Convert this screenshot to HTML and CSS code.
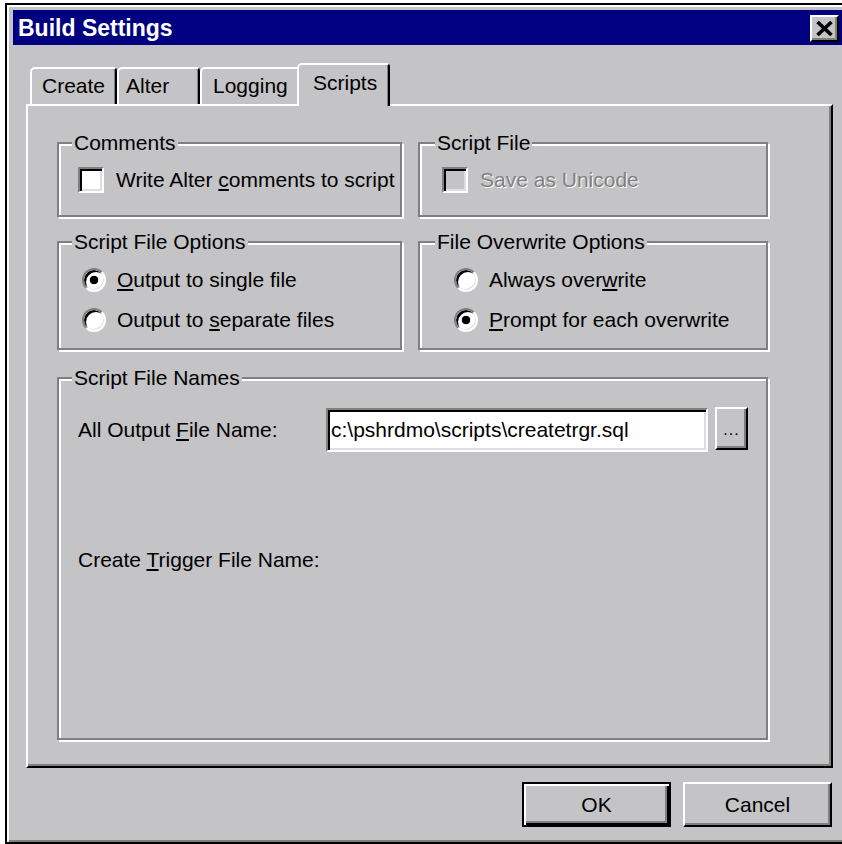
FILE: index.html
```html
<!DOCTYPE html>
<html lang="en">
<head>
<meta charset="utf-8">
<title>Build Settings</title>
<link rel="stylesheet" href="styles.css">
</head>
<body>
<div class="window">
  <div class="titlebar">
    <span class="title">Build Settings</span>
    <div class="close" role="button" aria-label="Close">
      <svg width="17" height="15" viewBox="0 0 17 15" aria-hidden="true">
        <path d="M1.5 1 L15.5 14 M15.5 1 L1.5 14" stroke="#000" stroke-width="3.6" fill="none"/>
      </svg>
    </div>
  </div>

  <div class="dialog-body">
    <div class="tabs">
      <div class="tab tab-create">Create</div>
      <div class="tab tab-alter">Alter</div>
      <div class="tab tab-logging">Logging</div>
      <div class="tab tab-scripts active">Scripts</div>
    </div>

    <div class="panel">
      <div class="groups">
        <fieldset class="group">
          <legend>Comments</legend>
          <div class="group-content comments">
            <div class="option"><span class="check"></span><span>Write Alter <u>c</u>omments to script</span></div>
          </div>
        </fieldset>

        <fieldset class="group right">
          <legend>Script File</legend>
          <div class="group-content script-file">
            <div class="option disabled"><span class="check"></span><span>Save as Unicode</span></div>
          </div>
        </fieldset>

        <fieldset class="group">
          <legend>Script File Options</legend>
          <div class="group-content radios file-options">
            <div class="option"><span class="radio checked"></span><span><u>O</u>utput to single file</span></div>
            <div class="option"><span class="radio"></span><span>Output to <u>s</u>eparate files</span></div>
          </div>
        </fieldset>

        <fieldset class="group right">
          <legend>File Overwrite Options</legend>
          <div class="group-content radios overwrite">
            <div class="option"><span class="radio"></span><span>Always over<u>w</u>rite</span></div>
            <div class="option"><span class="radio checked"></span><span><u>P</u>rompt for each overwrite</span></div>
          </div>
        </fieldset>
      </div>

      <fieldset class="group names">
        <legend>Script File Names</legend>
        <div class="group-content name-rows">
          <div class="name-row">
            <span class="name-label">All Output <u>F</u>ile Name:</span>
            <div class="textbox">c:\pshrdmo\scripts\createtrgr.sql</div>
            <div class="browse">...</div>
          </div>
          <div class="name-row">
            <span class="name-label">Create <u>T</u>rigger File Name:</span>
          </div>
        </div>
      </fieldset>
    </div>

    <div class="buttons">
      <div class="btn default">OK</div>
      <div class="btn">Cancel</div>
    </div>
  </div>
</div>
</body>
</html>
```

FILE: styles.css
```css
* {
  box-sizing: border-box;
}

html,
body {
  margin: 0;
  padding: 0;
  background: #fff;
  overflow: hidden;
}

body {
  width: 842px;
  height: 844px;
  font-family: "Liberation Sans", Arial, sans-serif;
  font-size: 21px;
  line-height: 24px;
  color: #000;
}

/* Window frame: runs on past the right and bottom edges */
.window {
  margin: 3px 0 0 5px;
  width: 846px;
  height: 841px;
  background: #c4c3c6;
  border: 2px solid #000;
  box-shadow: inset 2px 2px 0 #fff, inset -2px -2px 0 #808080;
  padding: 5px 6px 0 6px;
}

/* Caption bar */
.titlebar {
  height: 35px;
  background: #000080;
  display: flex;
  align-items: center;
  justify-content: space-between;
  padding-left: 5px;
}

.title {
  color: #fff;
  font-weight: bold;
  font-size: 23px;
  line-height: 28px;
}

.close {
  width: 29px;
  height: 27px;
  margin-right: 4px;
  margin-top: 2px;
  background: #c4c3c6;
  border: 2px solid;
  border-color: #fff #000 #000 #fff;
  box-shadow: inset -2px -2px 0 #808080;
  display: flex;
  align-items: center;
  justify-content: center;
}

.close svg {
  display: block;
}

/* Client area */
.dialog-body {
  padding: 18px 0 0 13px;
}

/* Tab strip */
.tabs {
  display: flex;
  align-items: flex-end;
  height: 43px;
  margin-bottom: -2px;
  padding-left: 4px;
}

.tab {
  height: 37px;
  margin-bottom: 2px;
  background: #c4c3c6;
  border: 2px solid;
  border-bottom: 0;
  border-color: #fff #000 transparent #fff;
  border-radius: 5px 4px 0 0;
  box-shadow: inset -1px 0 0 #808080;
  padding-top: 5px;
  white-space: nowrap;
}

.tab-create {
  width: 87px;
  padding-left: 10px;
}

.tab-alter {
  width: 83px;
  padding-left: 7px;
}

.tab-logging {
  width: 101px;
  padding-left: 11px;
}

.tab-scripts {
  width: 93px;
  padding-left: 14px;
}

.tab.active {
  position: relative;
  z-index: 1;
  height: 43px;
  margin-bottom: 0;
  margin-left: -4px;
  padding-top: 6px;
}

/* Tab page */
.panel {
  width: 807px;
  height: 664px;
  border: 2px solid;
  border-color: #fff #000 #000 #fff;
  box-shadow: inset -2px -2px 0 #808080;
  padding: 25px 0 26px 29px;
  display: flex;
  flex-direction: column;
  align-items: flex-start;
}

.groups {
  display: grid;
  grid-template-columns: 345px 350px;
  column-gap: 16px;
  row-gap: 13px;
}

/* Etched group boxes */
.group {
  margin: 0;
  padding: 0;
  min-width: 0;
  border: 2px solid #808080;
  box-shadow: inset 2px 2px 0 #fff, 2px 2px 0 #fff;
}

.group legend {
  margin-left: 13px;
  padding: 0 2px;
  line-height: 24px;
  background: #c4c3c6;
}

.group.right legend {
  margin-left: 15px;
}

.group-content.comments {
  padding: 5px 0 15px 19px;
}

.group-content.script-file {
  padding: 5px 0 15px 22px;
}

.group-content.radios {
  padding: 6px 0 8px 23px;
}

.group-content.overwrite {
  padding-left: 34px;
}

.option {
  display: flex;
  align-items: center;
  height: 40px;
  white-space: nowrap;
}

/* Check box */
.check {
  width: 26px;
  height: 26px;
  margin-right: 12px;
  background: #fff;
  border: 2px solid;
  border-color: #808080 #fff #fff #808080;
  box-shadow: inset 2px 2px 0 #000, inset -2px -2px 0 #dfdfdf;
  flex: none;
}

.option.disabled {
  color: #808080;
  text-shadow: 1px 1px 0 #fff;
}

.option.disabled .check {
  background: #c4c3c6;
}

/* Radio button */
.radio {
  width: 24px;
  height: 24px;
  margin-right: 11px;
  border-radius: 50%;
  background: #fff;
  border: 2px solid;
  border-color: #808080 #fff #fff #808080;
  box-shadow: inset 2px 2px 0 #000, inset -1px -1px 0 #dfdfdf;
  flex: none;
}

.radio.checked {
  background: radial-gradient(circle, #000 0 4px, #fff 4.6px);
}

/* File name section */
.group.names {
  flex: 1;
  width: 711px;
  margin-top: 16px;
}

.name-rows {
  padding: 17px 0 0 19px;
  display: grid;
  row-gap: 85px;
}

.name-row {
  display: grid;
  grid-template-columns: 241px 382px 33px;
  column-gap: 7px;
  align-items: center;
  height: 45px;
}

.name-label {
  white-space: nowrap;
}

.textbox {
  height: 44px;
  margin-top: 1px;
  align-self: start;
  background: #fff;
  border: 2px solid;
  border-color: #808080 #fff #fff #808080;
  box-shadow: inset 2px 2px 0 #000, inset -2px -2px 0 #dfdfdf;
  padding: 8px 0 0 3px;
  white-space: nowrap;
  overflow: hidden;
}

.browse {
  height: 43px;
  align-self: start;
  border: 2px solid;
  border-color: #fff #000 #000 #fff;
  box-shadow: inset -2px -2px 0 #808080;
  font-size: 16px;
  text-align: center;
  padding-top: 9px;
  letter-spacing: 1px;
}

/* Dialog buttons */
.buttons {
  width: 807px;
  display: flex;
  justify-content: flex-end;
  column-gap: 12px;
  margin-top: 14px;
  padding-right: 1px;
}

.btn {
  width: 149px;
  height: 45px;
  border: 2px solid;
  border-color: #fff #000 #000 #fff;
  box-shadow: inset -2px -2px 0 #808080;
  display: flex;
  align-items: center;
  justify-content: center;
}

.btn.default {
  border-color: #000;
  box-shadow: inset 2px 2px 0 #fff, inset -2px -2px 0 #000, inset -4px -4px 0 #808080;
}
```
